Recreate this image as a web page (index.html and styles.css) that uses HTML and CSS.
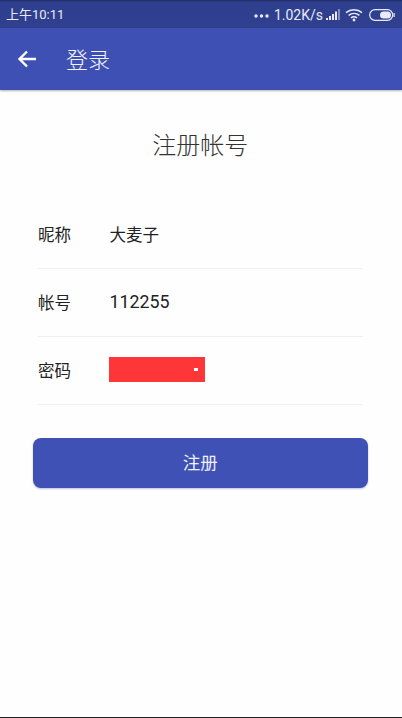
FILE: index.html
```html
<!DOCTYPE html>
<html lang="zh">
<head>
<meta charset="utf-8">
<title>注册帐号</title>
<link rel="stylesheet" href="styles.css">
</head>
<body>
<div class="screen">
  <div class="status">
    <span class="time">上午10:11</span>
    <div class="status-right">
      <svg class="dots" width="15" height="4" viewBox="0 0 15 4"><circle cx="2" cy="2" r="1.7"/><circle cx="7.5" cy="2" r="1.7"/><circle cx="13" cy="2" r="1.7"/></svg>
      <span class="speed">1.02K/s</span>
      <svg class="signal" width="14" height="12" viewBox="0 0 14 12"><rect x="0" y="9" width="2" height="2"/><rect x="3" y="7" width="2" height="4"/><rect x="6" y="5" width="2" height="6"/><rect x="9" y="2.500" width="2" height="8.500"/><rect x="12" y="0" width="2" height="11" opacity=".45"/></svg>
      <svg class="wifi" width="18" height="14" viewBox="0 0 18 14"><path d="M1 4.600C5.500.8 12.500.8 17 4.600M3.600 7.300c3.200-2.500 7.600-2.500 10.800 0M6 9.800c1.800-1.300 4.200-1.300 6 0" fill="none" stroke="#e8ebf7" stroke-width="1.500"/><circle cx="9" cy="12" r="1.400" fill="#e8ebf7"/></svg>
      <svg class="battery" width="26" height="12" viewBox="0 0 26 12"><rect x=".7" y=".7" width="23" height="10.600" rx="5.300" fill="none" stroke="#e8ebf7" stroke-width="1.200"/><rect x="11" y="2.500" width="11" height="7" rx="3.500" fill="#e8ebf7"/><rect x="24.500" y="4" width="1.200" height="4" fill="#e8ebf7"/></svg>
    </div>
  </div>
  <header class="appbar">
    <svg class="back" width="20" height="18" viewBox="0 0 20 18"><path d="M19 9H3M10 1.500 2.500 9l7.500 7.500" fill="none" stroke="#fff" stroke-width="2.400"/></svg>
    <span class="appbar-title">登录</span>
  </header>
  <main class="content">
    <h1 class="title">注册帐号</h1>
    <div class="form">
      <div class="row"><span class="label">昵称</span><span class="value">大麦子</span></div>
      <div class="row"><span class="label">帐号</span><span class="value number">112255</span></div>
      <div class="row"><span class="label">密码</span><span class="mask"><i class="speck"></i></span></div>
    </div>
    <button class="submit" type="button">注册</button>
  </main>
  <div class="bottom-line"></div>
</div>
</body>
</html>
```

FILE: styles.css
```css
* { box-sizing: border-box; }
html, body { margin: 0; padding: 0; }
body { width: 402px; height: 718px; overflow: hidden; background: #fff; font-family: "Noto Sans CJK SC", sans-serif; }
.screen { width: 402px; height: 718px; display: flex; flex-direction: column; background: #fefefe; }
.status { height: 28px; flex: none; display: flex; align-items: center; justify-content: space-between; padding: 1px 7px 0 6px; background: linear-gradient(#1d2a5c 0, #2f3f8f 2px, #30408f 100%); color: #e8ebf7; font-size: 13px; font-family: Roboto, "Noto Sans CJK SC", sans-serif; }
.time { font-size: 13px; line-height: 28px; }
.status-right { display: flex; align-items: center; }
.dots { fill: #e8ebf7; margin-right: 5px; margin-top: 3px; }
.speed { font-size: 14px; margin-right: 3px; }
.signal { fill: #e8ebf7; margin-right: 5px; }
.wifi { margin-right: 6px; }
.appbar { height: 62px; flex: none; display: flex; align-items: center; padding: 0 0 0 17px; background: #3e50b4; box-shadow: 0 1px 2px rgba(0,0,0,.3); color: #f1f3fb; }
.back { margin-right: 29px; }
.appbar-title { font-size: 22px; line-height: 60px; height: 62px; font-weight: 300; }
.content { flex: 1; display: flex; flex-direction: column; padding: 0 34px 0 32.500px; }
.title { margin: 38px 0 0; height: 32px; line-height: 32px; text-align: center; font-size: 24px; font-weight: 300; color: #333; }
.form { margin-top: 41px; padding: 0 5px 0 5.500px; }
.row { height: 68px; display: flex; align-items: center; padding-bottom: 2px; border-bottom: 1px solid #f0f0f0; }
.label { width: 71.500px; flex: none; font-size: 16.500px; line-height: 24px; color: #222; }
.value { font-size: 16.500px; line-height: 24px; color: #222; }
.number { font-family: Roboto, sans-serif; font-size: 17.800px; }
.mask { display: flex; align-items: center; justify-content: flex-end; width: 96px; height: 25px; margin-left: -1px; padding-right: 7px; background: #fe3637; }
.speck { display: block; width: 4px; height: 3px; background: #fff; }
.submit { margin-top: 33px; height: 50px; width: 335.500px; padding: 0 0 3px; border: 0; border-radius: 8px; background: #3f51b5; box-shadow: 0 1px 2px rgba(63,81,181,.35); color: #eef0fa; font: 400 17.500px "Noto Sans CJK SC", sans-serif; }
.bottom-line { height: 1px; flex: none; background: #222; }
```
